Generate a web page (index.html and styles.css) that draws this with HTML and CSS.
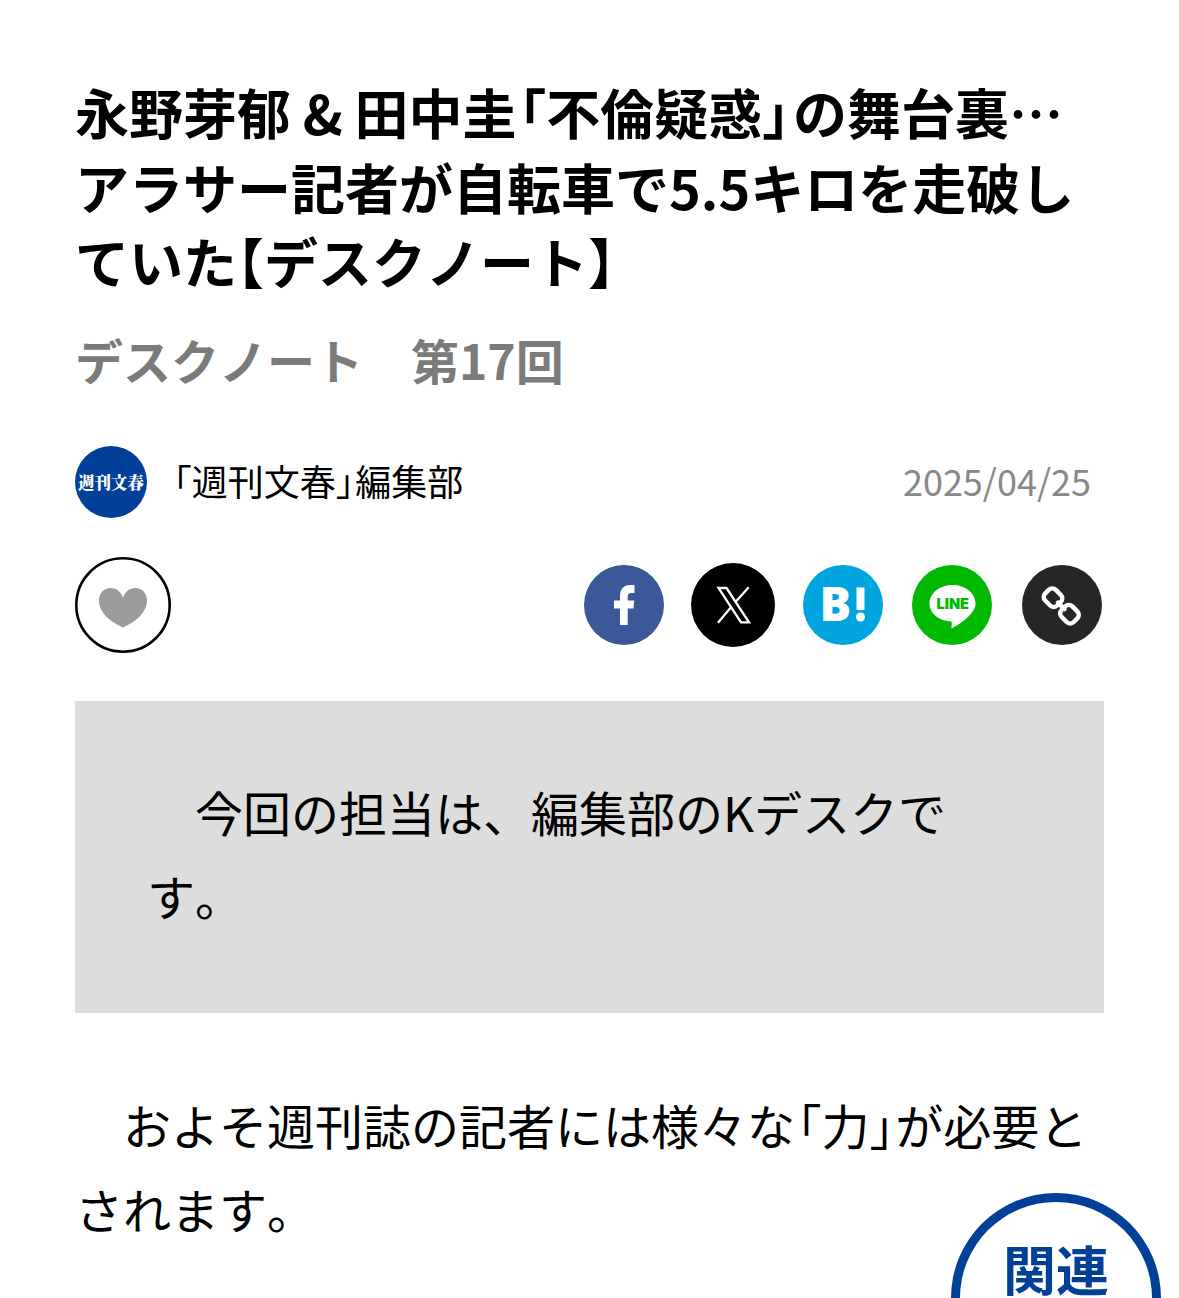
FILE: index.html
```html
<!DOCTYPE html>
<html lang="ja">
<head>
<meta charset="utf-8">
<title>デスクノート 第17回</title>
<link rel="stylesheet" href="styles.css">
</head>
<body>
<main class="article">
  <h1 class="title">永野芽郁 &amp; 田中圭<span class="open">「</span>不倫疑惑<span class="close">」</span>の舞台裏…<br>アラサー記者が自転車で5.5キロを走破し<br>ていた<span class="lenticular">【</span>デスクノート<span class="lenticular">】</span></h1>
  <p class="series">デスクノート　第17回</p>
  <div class="byline">
    <svg class="avatar" viewBox="0 0 72 72"><circle cx="36" cy="36" r="36" fill="#004098"/><text class="avatar-text" x="36" y="42.5" text-anchor="middle">週刊文春</text></svg>
    <span class="author"><span class="open">「</span>週刊文春<span class="close">」</span>編集部</span>
    <time class="date">2025/04/25</time>
  </div>
  <div class="actions">
    <svg class="like" viewBox="0 0 96 96"><circle cx="48" cy="48" r="46.7" fill="#fff" stroke="#000" stroke-width="2.6"/><path d="M48 70.500C38 66 24 57 24 43.500C24 36 29 31 35.500 31C41.500 31 46.500 35 48 41C49.500 35 54.500 31 60.500 31C67 31 72 36 72 43.500C72 57 58 66 48 70.500Z" fill="#9b9b9b"/></svg>
    <div class="share">
      <svg class="icon" viewBox="0 0 80 80"><circle cx="40" cy="40" r="40" fill="#3b5998"/><path d="M36 60V43.500H30V35.500H36V31.500C36 24 39.500 20 46 20H50.500V28H47.500C44.500 28 43.700 29.500 43.700 32V35.500H50.200L49.500 43.500H43.700V60Z" fill="#fff"/></svg>
      <svg class="icon icon-x" viewBox="0 0 84 84"><circle cx="42" cy="42" r="42" fill="#000"/><path d="M27.500 25H35.500L58 59.300H50Z" fill="none" stroke="#fff" stroke-width="2.300"/><path d="M57.700 24.300L44.500 39M40.600 43.600L27 59.700" fill="none" stroke="#fff" stroke-width="2.300"/></svg>
      <svg class="icon" viewBox="0 0 80 80"><circle cx="40" cy="40" r="40" fill="#00a4de"/><text class="hatena-text" x="16.500" y="56.200">B</text><path d="M53.500 22.500H61.500V45H53.500Z" fill="#fff"/><circle cx="57.500" cy="52" r="4.500" fill="#fff"/></svg>
      <svg class="icon" viewBox="0 0 80 80"><circle cx="40" cy="40" r="40" fill="#00b900"/><path d="M40.500 20C53 20 63.500 28 63.500 38.500C63.500 49 48 59 39.500 63.500C39.500 61 40 58 39.500 56.500C27 56 17.500 48.500 17.500 38.500C17.500 28 28 20 40.500 20Z" fill="#fff"/><text class="line-text" x="24.500" y="43.900" textLength="32.500" lengthAdjust="spacingAndGlyphs">LINE</text></svg>
      <svg class="icon icon-link" viewBox="0 0 80 80"><circle cx="40" cy="40" r="40" fill="#262626"/><g fill="none" stroke="#fff" stroke-width="4.500"><rect x="-8.500" y="-7.500" width="17" height="15" rx="5" transform="translate(31 32.700) rotate(45)"/><rect x="-8.500" y="-7.500" width="17" height="15" rx="5" transform="translate(47.500 49.200) rotate(45)"/><path d="M36 37.700L42.500 44.200" stroke-linecap="round"/></g></svg>
    </div>
  </div>
  <section class="notice"><p>　今回の担当は、編集部のKデスクで<br>す。</p></section>
  <p class="body-text">　およそ週刊誌の記者には様々な<span class="open">「</span>力<span class="close">」</span>が必要と<br>されます。</p>
</main>
<div class="related">関連</div>
</body>
</html>
```
FILE: styles.css
```css
* { box-sizing: border-box; }
html, body { height: 1298px; overflow: hidden; }
body {
  margin: 0;
  position: relative;
  background: #fff;
  color: #000;
  font-family: "Noto Sans CJK JP", sans-serif;
  font-kerning: none;
}
h1, p { margin: 0; white-space: nowrap; }
.article { padding: 75px 75px 0; }
.open, .close, .lenticular { font-feature-settings: "halt"; }
.open { margin-left: .05em; }
.close { margin-right: .04em; }
.title .close { margin-right: .07em; }
.title { font-size: 54px; line-height: 74.7px; font-weight: 700; word-spacing: -.5px; }
.series { margin-top: 24px; font-size: 48px; line-height: 72px; font-weight: 700; color: #7b7b7b; }
.byline { display: flex; align-items: center; height: 72px; margin-top: 50.9px; }
.avatar { width: 72px; height: 72px; }
.avatar-text { font: 900 16.5px "Noto Serif CJK JP", "Noto Sans CJK JP", serif; fill: #fff; }
.author { margin-left: 25px; padding-bottom: 5px; font-size: 36px; line-height: 54px; white-space: nowrap; }
.date { margin-left: auto; margin-right: 13px; padding-bottom: 4px; font-size: 36px; line-height: 54px; color: #888; }
.actions { display: flex; align-items: center; justify-content: space-between; height: 96px; margin-top: 39px; }
.like { width: 96px; height: 96px; }
.share { display: flex; align-items: center; gap: 29px; margin-right: 2px; }
.icon { width: 80px; height: 80px; }
.icon-x { width: 84px; height: 84px; margin: 0 -1px 0 -2px; }
.icon-link { margin-left: 1px; }
.hatena-text { font: 800 47px "Open Sans", sans-serif; fill: #fff; }
.line-text { font: 900 14px Inter, sans-serif; fill: #00b900; }
.notice { margin-top: 48px; padding: 68px 72px 76px; background: #ddd; }
.notice p, .body-text { font-size: 48px; line-height: 84px; }
.body-text { margin-top: 69px; }
.related {
  position: absolute;
  left: 951px;
  top: 1193px;
  width: 210px;
  height: 105px;
  padding-top: 38px;
  border: 9px solid #004098;
  border-bottom: 0;
  border-radius: 105px 105px 0 0;
  background: #fff;
  color: #004098;
  font-size: 53px;
  font-weight: 700;
  line-height: 56px;
  text-align: center;
}
```
